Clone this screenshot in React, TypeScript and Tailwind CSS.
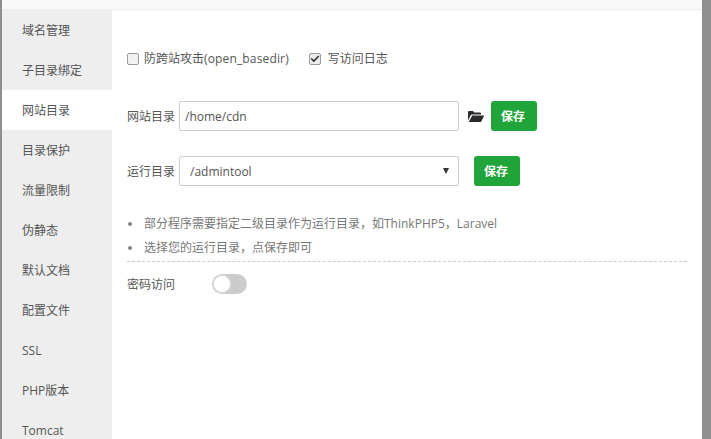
import { Check } from "lucide-react";

const MENU = ["域名管理", "子目录绑定", "网站目录", "目录保护", "流量限制", "伪静态", "默认文档", "配置文件", "SSL", "PHP版本", "Tomcat"];

function SaveButton() {
  return (
    <button className="flex h-[30px] w-[46px] items-center justify-center rounded-[3px] bg-[#20a53a] pr-[2px] pt-[2px] text-[12px] font-bold text-white">
      保存
    </button>
  );
}

function FolderIcon() {
  return (
    <svg width="16" height="13" viewBox="0 0 16 13" fill="#2a2a2a">
      <path d="M0 2 Q0 1 1 1 H5 L6.2 2.6 H12 Q13 2.6 13 3.6 V4.6 H4 Q3 4.6 2.6 5.4 L0 10.5 Z" />
      <path d="M4.2 5.6 H15.6 Q16.2 5.6 15.9 6.2 L13 12 H0.8 Z" />
    </svg>
  );
}

export default function App() {
  return (
    <div
      className="flex h-[439px] w-[711px] overflow-hidden bg-[#8f8f8f] text-[12px] text-[#555]"
      style={{ fontFamily: '"Open Sans", "Noto Sans CJK SC", sans-serif' }}
    >
      <div className="w-[2px] shrink-0 bg-[#8f8f8f]" />
      <div className="flex w-[700px] shrink-0 flex-col bg-white">
        <div className="h-[10px] shrink-0 border-b border-[#eee] bg-[#f8f8f8]" />
        <div className="flex min-h-0 flex-1">
          <div className="w-[110px] shrink-0 overflow-hidden bg-[#eee]">
            {MENU.map((m) => (
              <div
                key={m}
                className={`flex h-[40px] items-center pl-5 pt-[2px] ${m === "网站目录" ? "bg-white" : ""}`}
              >
                {m}
              </div>
            ))}
          </div>
          <div className="flex-1 pl-[15px] pr-[15px]">
            <div className="mt-[40px] flex h-[18px] items-center">
              <span className="mr-[5px] h-[12px] w-[12px] rounded-[2px] border border-[#9a9a9a] bg-[#f2f2f2]" />
              <span>
                防跨站攻击<span className="tracking-[0.15px]">(open_basedir)</span>
              </span>
              <span className="ml-[20px] mr-[7px] flex h-[12px] w-[12px] items-center justify-center rounded-[2px] border border-[#9a9a9a] bg-[#ececec]">
                <Check size={10} strokeWidth={4} className="text-[#333]" />
              </span>
              <span>写访问日志</span>
            </div>
            <div className="mt-[33px] flex h-[30px] items-center">
              <span className="w-[52px] pt-[2px]">网站目录</span>
              <div className="flex h-[30px] w-[280px] items-center rounded-[2px] border border-[#ccc] pl-[5px] pt-[2px] text-[#555]">
                /home/cdn
              </div>
              <span className="ml-[9px] mr-[7px] flex">
                <FolderIcon />
              </span>
              <SaveButton />
            </div>
            <div className="mt-[25px] flex h-[30px] items-center">
              <span className="w-[52px] pt-[2px]">运行目录</span>
              <div className="flex h-[30px] w-[280px] items-center justify-between rounded-[2px] border border-[#ccc] pl-[10px] pr-[9px]">
                <span className="pt-[2px]">/admintool</span>
                <span className="h-0 w-0 border-x-[3.5px] border-t-[6px] border-x-transparent border-t-[#333]" />
              </div>
              <span className="ml-[15px] flex">
                <SaveButton />
              </span>
            </div>
            <ul className="mt-[26px] border-b border-dashed border-[#ccc] pb-[1px] text-[#777]">
              <li className="flex h-[24px] items-center">
                <span className="ml-[1px] mr-[12px] h-[4px] w-[4px] rounded-full bg-[#888]" />
                部分程序需要指定二级目录作为运行目录，如ThinkPHP5，Laravel
              </li>
              <li className="flex h-[24px] items-center">
                <span className="ml-[1px] mr-[12px] h-[4px] w-[4px] rounded-full bg-[#888]" />
                选择您的运行目录，点保存即可
              </li>
            </ul>
            <div className="mt-[8px] flex h-[28px] items-center">
              <span className="w-[85px] pt-[2px]">密码访问</span>
              <span className="flex h-[20px] w-[35px] items-center rounded-full bg-[#ccc] pl-[1px]">
                <span className="h-[18px] w-[18px] rounded-full border border-[#ddd] bg-white" />
              </span>
            </div>
          </div>
        </div>
      </div>
      <div className="flex-1 bg-[#8f8f8f]" />
    </div>
  );
}
